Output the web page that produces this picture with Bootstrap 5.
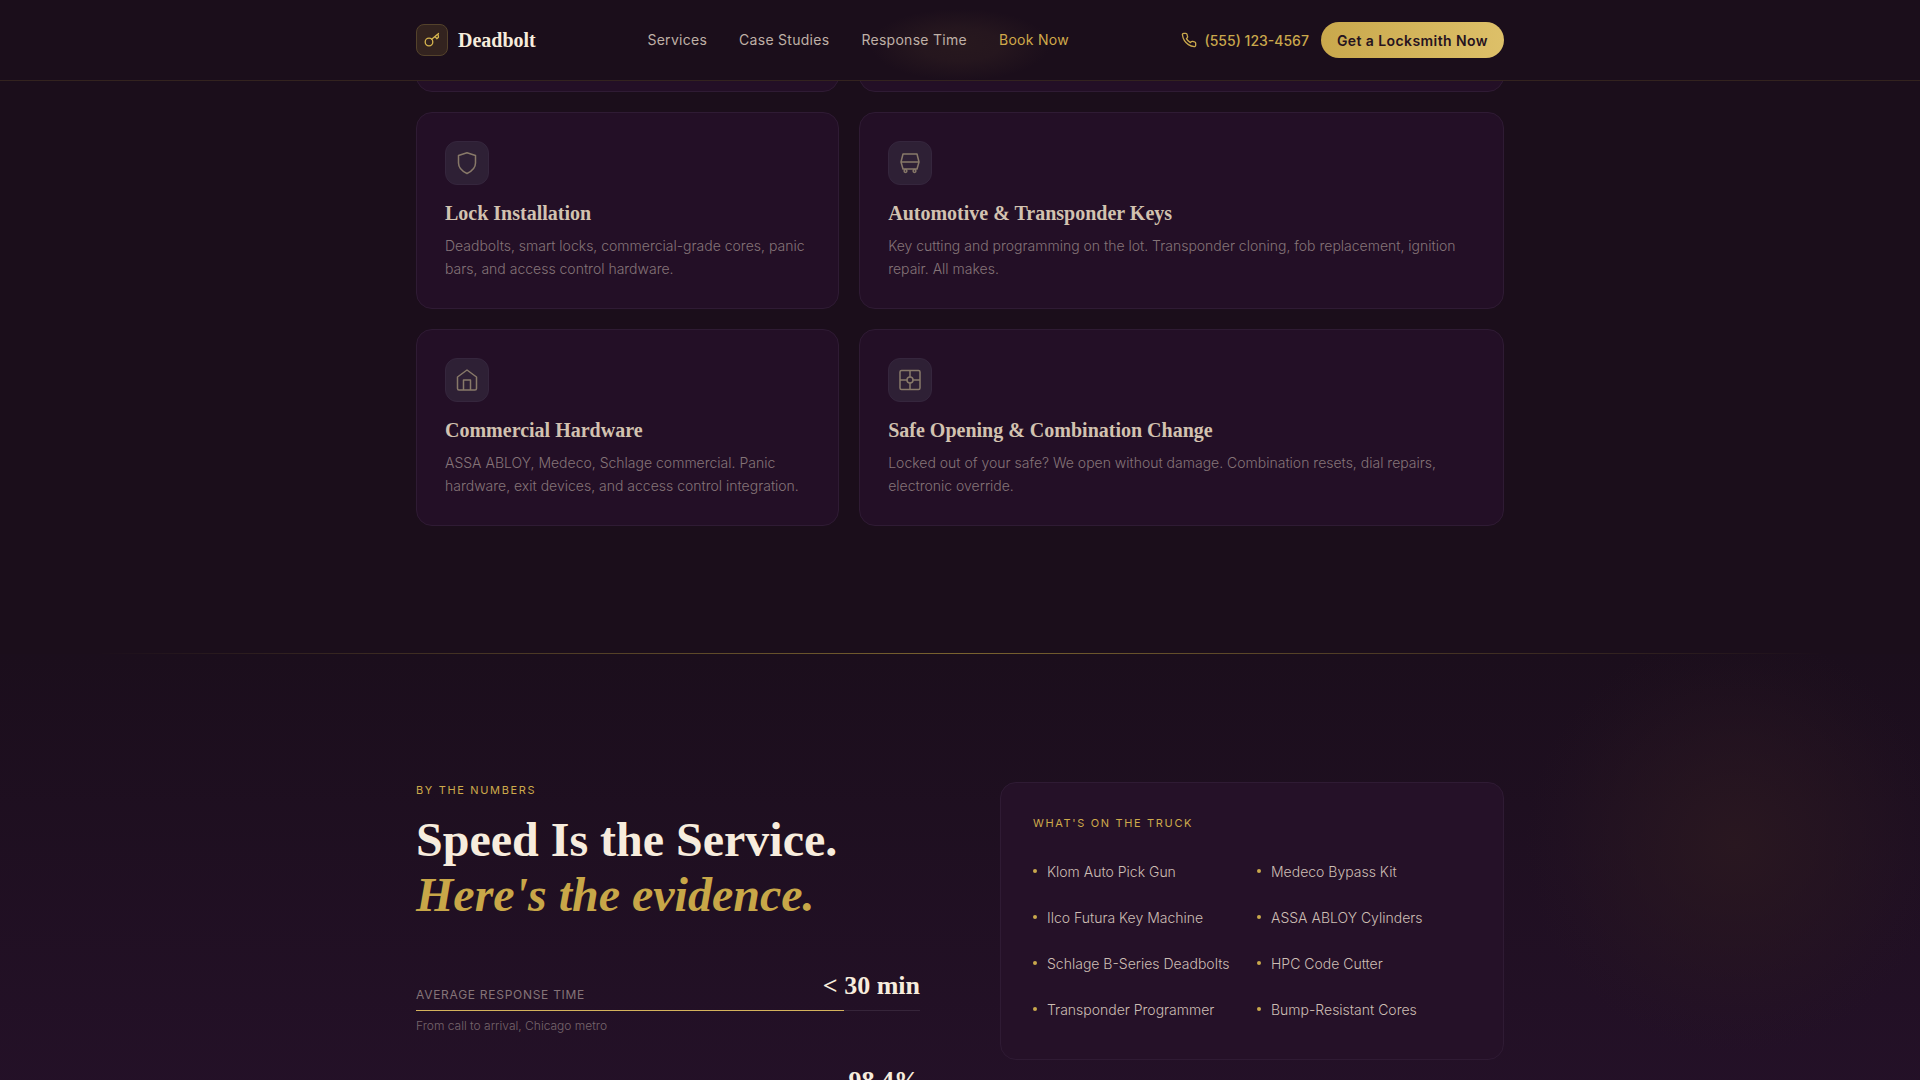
<!DOCTYPE html>
<html lang="en">
<head>
<meta charset="utf-8">
<meta name="viewport" content="width=device-width, initial-scale=1">
<title>Deadbolt</title>
<link href="https://cdn.jsdelivr.net/npm/bootstrap@5.3.0/dist/css/bootstrap.min.css" rel="stylesheet">
<style>
:root{--ink:#1b0e1b;--panel:#230f26;--gold:#c9a84c;--gold-2:#ddc069;--cream:#f7ecdd;--sand:#d2c2b0;--dim:#857478;--line:#2f1b34}
body{background:var(--ink);color:var(--sand);font-family:Inter,"Noto Sans",sans-serif;font-size:14px;overflow-x:hidden}
a{text-decoration:none}
.shell{max-width:1152px;padding-left:32px;padding-right:32px}
.display-serif{font-family:"Liberation Serif",serif;font-weight:700}
.site-head{background:radial-gradient(ellipse 90px 36px at 50% 56%,#27181e 0,#25161e 45%,transparent 100%) var(--ink);border-bottom:1px solid #33231f;height:81px}
.brand{gap:10px}
.logo-box{width:32px;height:32px;border-radius:8px;background:#33231f;border:1px solid #54422b;color:#d6b54f}
.logo-name{font-size:20px;line-height:24px;color:var(--cream)}
.top-links{gap:32px}
.top-links a{color:#bfb0a6;letter-spacing:.02em;line-height:20px}
.top-links a.is-active{color:#d0a94a}
.phone{color:var(--gold);font-weight:500;gap:8px}
.cta{height:36px;padding:0 16px;border:0;border-radius:18px;background:linear-gradient(90deg,var(--gold),var(--gold-2));color:#26131f;font-weight:600;letter-spacing:.03em}
.services{padding-bottom:127px}
.svc-grid{display:grid;grid-template-columns:repeat(5,minmax(0,1fr));gap:20px}
.svc{background:var(--panel);border:1px solid var(--line);border-radius:16px;padding:28px}
.svc:nth-child(odd){grid-column:span 2}
.svc:nth-child(even){grid-column:span 3}
.svc-tail{height:92px}
.svc-icon{width:44px;height:44px;border-radius:12px;background:#2e2035;border:1px solid #35263d;color:#887969;margin-bottom:16px}
.svc h3{font-size:20px;line-height:25px;margin-bottom:8px;color:var(--sand)}
.svc p{line-height:23px;font-weight:300;color:var(--dim);margin:0}
.rule{height:1px;background:linear-gradient(90deg,transparent 5%,#7a632f 50%,transparent 95%)}
.numbers{padding:128px 0 22px;background:radial-gradient(circle 210px at calc(50% + 775px) 190px,#291720,#2817211a 85%,#28172100) no-repeat,linear-gradient(#1b0e1c,#251129 100%)}
.two-up{display:grid;grid-template-columns:1fr 1fr;gap:80px;align-items:start}
.eyebrow{font-size:11px;line-height:16px;letter-spacing:.15em;text-transform:uppercase;color:#cdaa4b}
.headline{font-size:48px;line-height:55px;color:var(--cream);margin:14px 0 48px}
.headline em{color:#c8a748}
.stat{margin-bottom:30px}
.stat-name{font-size:12px;line-height:14px;letter-spacing:.06em;text-transform:uppercase;color:var(--dim)}
.stat-val{font-size:26px;line-height:32px;color:var(--cream)}
.track{height:1px;background:#36253a;margin:8px 0 6px}
.track div{height:1px;background:#d5b35c}
.stat-note{font-size:12px;line-height:18px;font-weight:300;color:#76656c}
.truck{background:#251128;border:1px solid var(--line);border-radius:16px;padding:32px}
.truck ul{display:grid;grid-template-columns:1fr 1fr;gap:10px;margin:22px 0 0}
.truck li{display:flex;align-items:center;gap:10px;height:36px;font-weight:300;color:#cdbeb4}
.truck li::before{content:"";width:4px;height:4px;border-radius:50%;background:var(--gold)}
</style>
<script src="https://cdn.jsdelivr.net/npm/bootstrap@5.3.0/dist/js/bootstrap.bundle.min.js"></script>
</head>
<body>
<header class="site-head fixed-top">
  <div class="container-fluid shell h-100 d-flex align-items-center justify-content-between">
    <a href="#" class="brand d-flex align-items-center">
      <span class="logo-box d-flex align-items-center justify-content-center">
        <svg width="16" height="16" viewBox="0 0 16 16" fill="none" stroke="currentColor" stroke-width="1.3" stroke-linecap="round" stroke-linejoin="round"><circle cx="5" cy="10" r="3.800"/><path d="M7.700 7.300 14.500 1.500M11 4.500l1.800 2.200 1.700-1.500-.5-3.200"/></svg>
      </span>
      <span class="display-serif logo-name">Deadbolt</span>
    </a>
    <nav class="d-flex top-links" aria-label="Main">
      <a href="#services">Services</a>
      <a href="#cases">Case Studies</a>
      <a href="#response">Response Time</a>
      <a href="#book" class="is-active">Book Now</a>
    </nav>
    <div class="d-flex align-items-center gap-2">
      <a href="tel:5551234567" class="phone d-flex align-items-center me-1">
        <svg width="16" height="16" viewBox="0 0 24 24" fill="none" stroke="currentColor" stroke-width="2" stroke-linecap="round" stroke-linejoin="round"><path d="M22 16.920v3a2 2 0 0 1-2.180 2 19.800 19.800 0 0 1-8.630-3.070 19.500 19.500 0 0 1-6-6A19.800 19.800 0 0 1 2.120 4.180 2 2 0 0 1 4.110 2h3a2 2 0 0 1 2 1.720c.13.96.36 1.900.7 2.810a2 2 0 0 1-.45 2.110L8.090 9.910a16 16 0 0 0 6 6l1.270-1.270a2 2 0 0 1 2.110-.45c.91.34 1.850.57 2.810.7A2 2 0 0 1 22 16.920z"/></svg>
        <span>(555) 123-4567</span>
      </a>
      <button type="button" class="cta">Get a Locksmith Now</button>
    </div>
  </div>
</header>
<main>
  <section class="services" id="services">
    <div class="container-fluid shell">
      <div class="svc-grid">
        <div class="svc svc-tail"></div>
        <div class="svc svc-tail"></div>
        <article class="svc">
          <div class="svc-icon d-flex align-items-center justify-content-center"><svg width="24" height="24" viewBox="0 0 24 24" fill="none" stroke="currentColor" stroke-width="1.500" stroke-linejoin="round"><path d="M12 1.800 20.500 4.500v7.500c0 4.500-3.600 8.200-8.500 10.500-4.900-2.300-8.500-6-8.500-10.500V4.500z"/></svg></div>
          <h3 class="display-serif">Lock Installation</h3>
          <p>Deadbolts, smart locks, commercial-grade cores, panic bars, and access control hardware.</p>
        </article>
        <article class="svc">
          <div class="svc-icon d-flex align-items-center justify-content-center"><svg width="24" height="24" viewBox="0 0 24 24" fill="none" stroke="currentColor" stroke-width="1.500" stroke-linejoin="round"><path d="M5 3h14l2 8-2 7H5l-2-7zM3 11h18"/><circle cx="7.500" cy="20" r="1.400"/><circle cx="16.500" cy="20" r="1.400"/></svg></div>
          <h3 class="display-serif">Automotive &amp; Transponder Keys</h3>
          <p>Key cutting and programming on the lot. Transponder cloning, fob replacement, ignition repair. All makes.</p>
        </article>
        <article class="svc">
          <div class="svc-icon d-flex align-items-center justify-content-center"><svg width="24" height="24" viewBox="0 0 24 24" fill="none" stroke="currentColor" stroke-width="1.500" stroke-linejoin="round"><path d="M2.500 9 12 2l9.500 7v11.500a1.500 1.500 0 0 1-1.500 1.500H4a1.500 1.500 0 0 1-1.500-1.500zM8.500 22V12h7v10"/></svg></div>
          <h3 class="display-serif">Commercial Hardware</h3>
          <p>ASSA ABLOY, Medeco, Schlage commercial. Panic hardware, exit devices, and access control integration.</p>
        </article>
        <article class="svc">
          <div class="svc-icon d-flex align-items-center justify-content-center"><svg width="24" height="24" viewBox="0 0 24 24" fill="none" stroke="currentColor" stroke-width="1.500"><rect x="2" y="2.500" width="20" height="19" rx="1.500"/><circle cx="12" cy="12" r="3"/><path d="M12 2.500V9M12 15v6.500M2 12h7M15 12h7"/></svg></div>
          <h3 class="display-serif">Safe Opening &amp; Combination Change</h3>
          <p>Locked out of your safe? We open without damage. Combination resets, dial repairs, electronic override.</p>
        </article>
      </div>
    </div>
  </section>
  <div class="rule"></div>
  <section class="numbers" id="response">
    <div class="container-fluid shell two-up">
      <div>
        <div class="eyebrow">By the Numbers</div>
        <h2 class="display-serif headline">Speed Is the Service.<br><em>Here's the evidence.</em></h2>
        <div class="stat">
          <div class="d-flex justify-content-between align-items-end"><span class="stat-name">Average Response Time</span><span class="stat-val display-serif">&lt; 30 min</span></div>
          <div class="track"><div style="width:85%"></div></div>
          <div class="stat-note">From call to arrival, Chicago metro</div>
        </div>
        <div class="stat">
          <div class="d-flex justify-content-end"><span class="stat-val display-serif">98.4%</span></div>
        </div>
      </div>
      <aside class="truck">
        <div class="eyebrow">What's on the Truck</div>
        <ul class="list-unstyled">
          <li>Klom Auto Pick Gun</li><li>Medeco Bypass Kit</li>
          <li>Ilco Futura Key Machine</li><li>ASSA ABLOY Cylinders</li>
          <li>Schlage B-Series Deadbolts</li><li>HPC Code Cutter</li>
          <li>Transponder Programmer</li><li>Bump-Resistant Cores</li>
        </ul>
      </aside>
    </div>
  </section>
</main>
</body>
</html>
